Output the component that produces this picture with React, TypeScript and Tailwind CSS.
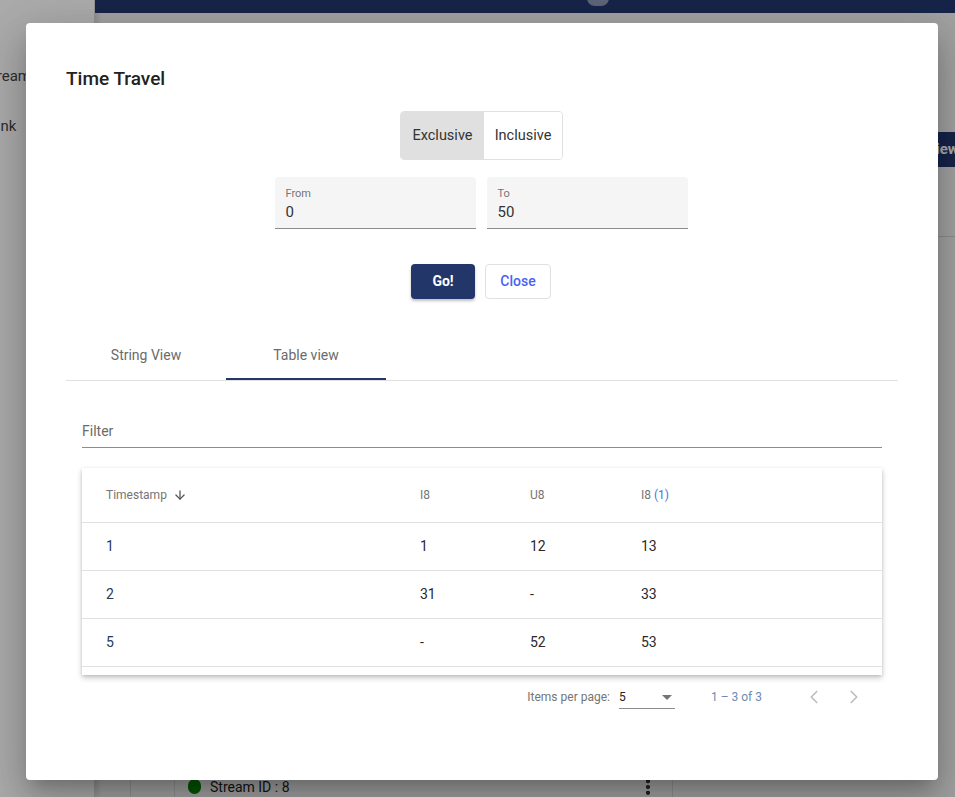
import { ChevronLeft, ChevronRight, ArrowDown, EllipsisVertical } from "lucide-react"

const rows = [
  { ts: "1", i8: "1", u8: "12", i81: "13" },
  { ts: "2", i8: "31", u8: "-", i81: "33" },
  { ts: "5", i8: "-", u8: "52", i81: "53" },
]

function Backdrop() {
  return (
    <div className="flex h-full">
      {/* Sidebar */}
      <aside className="w-[95px] shrink-0 border-r border-[#dcdcdc] bg-white pt-[65px] shadow-[2px_0_6px_rgba(0,0,0,0.15)]">
        <div className="ml-[-17px] flex flex-col gap-[27px] text-[15px] text-[#444]">
          <span>Stream</span>
          <span>Bank</span>
        </div>
      </aside>

      {/* Main */}
      <main className="flex min-w-0 flex-1 flex-col">
        <header className="flex h-[13px] shrink-0 justify-center bg-[#22366d] pl-[145px]">
          <div className="-mt-[10px] h-[16px] w-[22px] rounded-full bg-[#8a96b3]" />
        </header>
        <div className="flex flex-1 flex-col pl-[35px]">
          <div className="mt-[40px] flex h-[184px] items-start justify-end border-b border-[#d0d0d0] pt-[79px]">
            <button className="-mr-[35px] h-[35px] w-[80px] shrink-0 rounded bg-[#22366d] pl-[16px] text-left text-[15px] font-bold text-white">
              View
            </button>
          </div>
          <div className="mt-auto flex h-[40px] border-l border-[#d8d8d8] pl-[43px]">
            <div className="flex w-[499px] items-end border-x border-[#d8d8d8] pl-[13px] pr-[14px]">
              <span className="mb-[3px] h-[15px] w-[13px] rounded-full bg-[#008000]" />
              <span className="ml-[9px] text-[14px] leading-[20px] text-[#222]">Stream ID : 8</span>
              <EllipsisVertical size={20} className="ml-auto text-[#222]" strokeWidth={3} />
            </div>
          </div>
        </div>
      </main>
    </div>
  )
}

function Field({ label, value }: { label: string; value: string }) {
  return (
    <div className="flex h-[52px] w-[201px] flex-col rounded-t bg-[#f5f5f5] border-b border-[#8c8c8c] px-[11px] pt-[10px]">
      <span className="text-[11px] leading-[13px] text-[#757575]">{label}</span>
      <span className="mt-[2px] text-[15px] leading-[20px] text-[#333]">{value}</span>
    </div>
  )
}

export default function App() {
  return (
    <div className="relative h-[797px] w-[955px] overflow-hidden bg-[#f2f2f2] font-['Roboto',sans-serif]">
      <Backdrop />

      {/* Overlay + dialog */}
      <div className="absolute inset-0 bg-black/[0.33] pl-[26px] pt-[23px]">
        <div className="flex h-[757px] w-[912px] flex-col rounded bg-white px-[40px] pt-[42px] shadow-[0_11px_15px_-7px_rgba(0,0,0,0.2),0_24px_38px_3px_rgba(0,0,0,0.14),0_9px_46px_8px_rgba(0,0,0,0.12)]">
          <h2 className="text-[19px] font-medium leading-[28px] text-[#222]">Time Travel</h2>

          {/* Exclusive / Inclusive */}
          <div className="mt-[18px] flex justify-center pr-[1px]">
            <div className="flex h-[49px] overflow-hidden rounded border border-[#e0e0e0] text-[14.5px] text-[#333]">
              <button className="w-[83px] bg-[#e0e0e0]">Exclusive</button>
              <button className="w-[78px] bg-white">Inclusive</button>
            </div>
          </div>

          {/* Range */}
          <div className="mt-[17px] flex justify-center gap-[11px] pr-[2px]">
            <Field label="From" value="0" />
            <Field label="To" value="50" />
          </div>

          {/* Actions */}
          <div className="mt-[35px] flex justify-center gap-[10px] pr-[2px]">
            <button className="h-[35px] w-[64px] rounded bg-[#223669] text-[14px] font-bold text-white shadow-[0_2px_3px_rgba(0,0,0,0.25)]">
              Go!
            </button>
            <button className="h-[35px] w-[66px] rounded border border-[#e0e0e0] bg-white text-[14px] font-medium text-[#4763f5]">
              Close
            </button>
          </div>

          {/* Tabs */}
          <div className="mt-[32px] flex h-[50px] border-b border-[#e0e0e0] text-[14px] text-[#6b6b6b]">
            <div className="flex w-[160px] items-center justify-center">String View</div>
            <div className="flex w-[160px] items-center justify-center border-b-2 border-[#223669] pt-[2px]">Table view</div>
          </div>

          {/* Table view */}
          <div className="px-[16px]">
            <div className="mt-[29px] flex h-[38px] items-end border-b border-[#8c8c8c] pb-[5px] text-[14px] text-[#6b6b6b]">
              Filter
            </div>

            <div className="mt-[20px] h-[207px] overflow-hidden bg-white shadow-[0_3px_6px_rgba(0,0,0,0.2),0_1px_3px_rgba(0,0,0,0.12)]">
              <div className="grid h-[55px] grid-cols-[338px_110px_111px_1fr] items-center border-b border-[#e0e0e0] text-[12px] text-[#757575]">
                <div className="flex items-center gap-[6px] pl-[24px]">
                  Timestamp
                  <ArrowDown size={14} strokeWidth={2.2} className="text-[#555]" />
                </div>
                <div>I8</div>
                <div>U8</div>
                <div>
                  I8 <span className="text-[#4a74d6]">(1)</span>
                </div>
              </div>
              {rows.map(r => (
                <div
                  key={r.ts}
                  className="grid h-[48px] grid-cols-[338px_110px_111px_1fr] items-center border-b border-[#e0e0e0] text-[14px] text-[#2a2a2a]"
                >
                  <div className="pl-[24px] text-[#1f3a5c]">{r.ts}</div>
                  <div>{r.i8}</div>
                  <div>{r.u8}</div>
                  <div>{r.i81}</div>
                </div>
              ))}
            </div>

            {/* Paginator */}
            <div className="mt-[5px] flex h-[33px] items-center justify-end pr-[8px] text-[12px] text-[#757575]">
              <span>Items per page:</span>
              <div className="ml-[9px] flex h-[24px] w-[56px] items-center justify-between border-b border-[#8c8c8c] pt-[2px] text-[#222]">
                <span>5</span>
                <span className="mr-[3px] h-0 w-0 border-x-[5px] border-t-[5px] border-x-transparent border-t-[#757575]" />
              </div>
              <span className="ml-[36px] text-[#6f8bb3]">1 – 3 of 3</span>
              <div className="ml-[32px] flex text-[#bdbdbd]">
                <span className="flex w-[40px] items-center justify-center">
                  <ChevronLeft size={22} strokeWidth={1.8} />
                </span>
                <span className="flex w-[40px] items-center justify-center">
                  <ChevronRight size={22} strokeWidth={1.8} />
                </span>
              </div>
            </div>
          </div>
        </div>
      </div>
    </div>
  )
}
